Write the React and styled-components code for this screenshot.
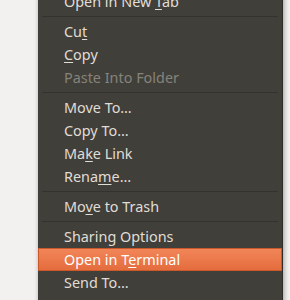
import React from "react";
import styled, { createGlobalStyle } from "styled-components";

const GlobalStyle = createGlobalStyle`
  html, body {
    margin: 0;
    padding: 0;
    background: #f2f1f0;
    overflow: hidden;
  }
  body {
    font-family: "Noto Sans", "DejaVu Sans", sans-serif;
  }
`;

const items = [
  { label: "Open in New Tab", key: 12 },
  { sep: true },
  { label: "Cut", key: 2 },
  { label: "Copy", key: 0 },
  { label: "Paste Into Folder", disabled: true },
  { sep: true },
  { label: "Move To…" },
  { label: "Copy To…" },
  { label: "Make Link", key: 2 },
  { label: "Rename…", key: 4 },
  { sep: true },
  { label: "Move to Trash", key: 2 },
  { sep: true },
  { label: "Sharing Options" },
  { label: "Open in Terminal", key: 9, active: true },
  { label: "Send To…" },
];

const App = () => {
  return (
    <>
      <GlobalStyle />
      <Page>
        <Menu>
          {items.map((item, i) =>
            item.sep ? (
              <Separator key={i} />
            ) : (
              <Item key={i} $disabled={item.disabled} $active={item.active}>
                <Label text={item.label} mnemonic={item.key} />
              </Item>
            )
          )}
        </Menu>
      </Page>
    </>
  );
};

const Label = ({ text, mnemonic }) => {
  if (mnemonic === undefined) return <span>{text}</span>;
  return (
    <span>
      {text.slice(0, mnemonic)}
      <Mnemonic>{text[mnemonic]}</Mnemonic>
      {text.slice(mnemonic + 1)}
    </span>
  );
};

export default App;

// Styled Components

const Page = styled.div`
  padding-left: 38px;
  margin-top: -10px;
`;

const Menu = styled.div`
  width: 244px;
  background: #413f3a;
  border-right: 1px solid #2e2d2a;
  box-shadow: 1px 0 5px rgba(0, 0, 0, 0.35);
  display: flex;
  flex-direction: column;
  padding-bottom: 20px;
`;

const Item = styled.div`
  height: 23px;
  display: flex;
  align-items: center;
  padding-left: 26px;
  font-size: 14.4px;
  color: ${(p) => (p.$disabled ? "#86837b" : p.$active ? "#ffffff" : "#e0ddd5")};
  background: ${(p) =>
    p.$active ? "linear-gradient(#f2875a, #e46b3c)" : "transparent"};
  box-shadow: ${(p) =>
    p.$active ? "inset 0 0 0 1px #c9582a" : "none"};
  white-space: nowrap;
`;

const Mnemonic = styled.span`
  text-decoration: underline;
  text-decoration-thickness: 1px;
  text-underline-offset: 2px;
`;

const Separator = styled.div`
  height: 1px;
  margin: 3px 4px;
  background: #33322e;
`;
